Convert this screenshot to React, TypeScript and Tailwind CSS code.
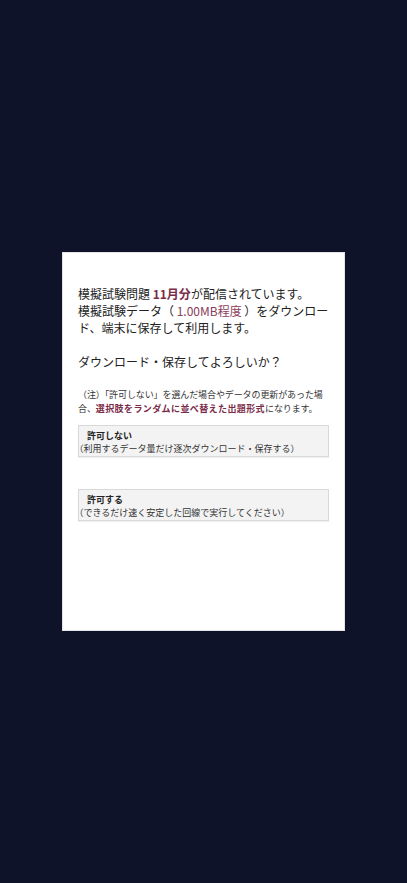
import React from "react";

const Choice: React.FC<{ title: string; note: string }> = ({ title, note }) => (
  <button className="block w-full text-left bg-[#f3f3f3] border border-[#d9d9d9] shadow-[0_1px_1px_rgba(0,0,0,0.06)] pt-[3px] pb-[1px] text-[9px] leading-[13px] text-[#333]">
    <span className="block font-bold pl-[8px] text-[#222]">{title}</span>
    <span className="block [text-spacing-trim:trim-start]">{note}</span>
  </button>
);

const App: React.FC = () => {
  return (
    <div
      className="w-full h-[883px] bg-[#0e1329] flex items-center justify-center"
      style={{ fontFamily: '"Noto Sans CJK JP", "Noto Sans", sans-serif' }}
    >
      {/* ダイアログ */}
      <div className="w-[283px] h-[379px] bg-white border border-[#e3e3e8] px-[15px] pt-8">
        <p className="text-[12px] leading-[17px] text-[#222]">
          模擬試験問題 <span className="font-bold text-[#7a2b48]">11月分</span>が配信されています。
          <br />
          模擬試験データ（ <span className="text-[#8a3d5a]">1.00MB程度</span> ）をダウンロード、端末に保存して利用します。
          <br />
          <br />
          ダウンロード・保存してよろしいか？
        </p>

        {/* 注意書き */}
        <p className="mt-[18px] text-[9px] leading-[13.5px] tracking-[-0.1px] text-[#333]">
          （注）「許可しない」を選んだ場合やデータの更新があった場合、
          <span className="font-bold text-[#7a2b48] tracking-[0.4px]">選択肢をランダムに並べ替えた出題形式</span>
          になります。
        </p>

        <div className="mt-[10px]">
          <Choice title="許可しない" note="（利用するデータ量だけ逐次ダウンロード・保存する）" />
        </div>
        <div className="mt-[32px]">
          <Choice title="許可する" note="（できるだけ速く安定した回線で実行してください）" />
        </div>
      </div>
    </div>
  );
};

export default App;
